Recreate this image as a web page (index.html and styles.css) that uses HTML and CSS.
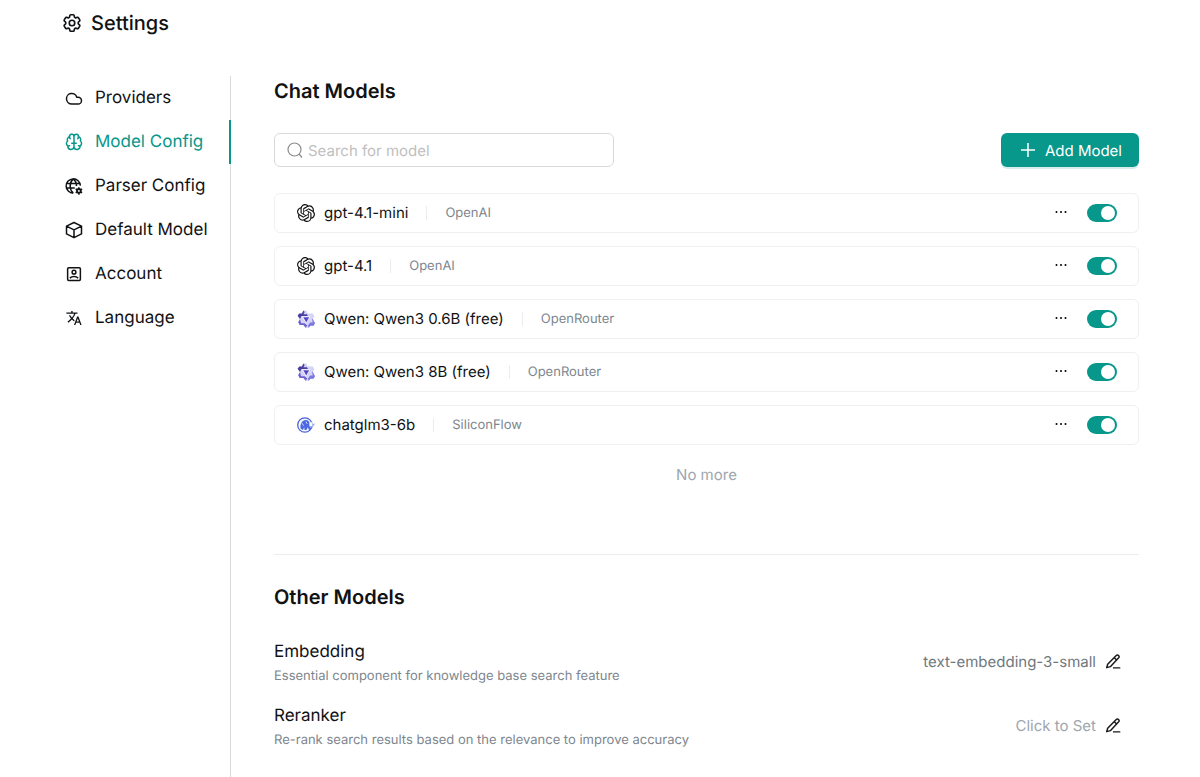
FILE: index.html
```html
<!DOCTYPE html>
<html lang="en">
<head>
<meta charset="utf-8">
<meta name="viewport" content="width=device-width, initial-scale=1">
<title>Settings</title>
<link rel="stylesheet" href="styles.css">
</head>
<body>
<svg class="defs" width="0" height="0" aria-hidden="true">
  <symbol id="i-openai" viewBox="0 0 24 24"><path fill="currentColor" d="M22.2819 9.8211a5.9847 5.9847 0 0 0-.5157-4.9108 6.0462 6.0462 0 0 0-6.5098-2.9A6.0651 6.0651 0 0 0 4.9807 4.1818a5.9847 5.9847 0 0 0-3.9977 2.9 6.0462 6.0462 0 0 0 .7427 7.0966 5.98 5.98 0 0 0 .511 4.9107 6.051 6.051 0 0 0 6.5146 2.9001A5.9847 5.9847 0 0 0 13.2599 24a6.0557 6.0557 0 0 0 5.7718-4.2058 5.9894 5.9894 0 0 0 3.9977-2.9001 6.0557 6.0557 0 0 0-.7475-7.0729zm-9.022 12.6081a4.4755 4.4755 0 0 1-2.8764-1.0408l.1419-.0804 4.7783-2.7582a.7948.7948 0 0 0 .3927-.6813v-6.7369l2.02 1.1686a.071.071 0 0 1 .038.052v5.5826a4.504 4.504 0 0 1-4.4945 4.4944zm-9.6607-4.1254a4.4708 4.4708 0 0 1-.5346-3.0137l.142.0852 4.783 2.7582a.7712.7712 0 0 0 .7806 0l5.8428-3.3685v2.3324a.0804.0804 0 0 1-.0332.0615L9.74 19.9502a4.4992 4.4992 0 0 1-6.1408-1.6464zM2.3408 7.8956a4.485 4.485 0 0 1 2.3655-1.9728V11.6a.7664.7664 0 0 0 .3879.6765l5.8144 3.3543-2.0201 1.1685a.0757.0757 0 0 1-.071 0l-4.8303-2.7865A4.504 4.504 0 0 1 2.3408 7.872zm16.5963 3.8558L13.1038 8.364 15.1192 7.2a.0757.0757 0 0 1 .071 0l4.8303 2.7913a4.4944 4.4944 0 0 1-.6765 8.1042v-5.6772a.79.79 0 0 0-.407-.667zm2.0107-3.0231l-.142-.0852-4.7735-2.7818a.7759.7759 0 0 0-.7854 0L9.409 9.2297V6.8974a.0662.0662 0 0 1 .0284-.0615l4.8303-2.7866a4.4992 4.4992 0 0 1 6.6802 4.66zM8.3065 12.863l-2.02-1.1638a.0804.0804 0 0 1-.038-.0567V6.0742a4.4992 4.4992 0 0 1 7.3757-3.4537l-.142.0805L8.704 5.459a.7948.7948 0 0 0-.3927.6813zm1.0976-2.3654l2.602-1.4998 2.6069 1.4998v2.9994l-2.5974 1.4997-2.6067-1.4997Z"/></symbol>
  <symbol id="i-qwen" viewBox="0 0 24 24">
    <path d="M8.500 .5h4l1.700 4h7l2 4-2.200 3.500 3 5.500-2 3.500h-4l-2.500 2.500h-4L8.500 20H3.600l-2-3.700L4 12 .8 7.600 3 4.500h3.600Z" fill="#d5d3f6"/>
    <path d="M8.500.5 6.600 4.500H3L.8 7.600 4 12l2-4h8.500l-1.200-2.500H8.600l1.600-3Z" fill="#4a3f9f"/>
    <path d="M1.600 16.300 3.600 20h5l3 3.500 2-2.800-3.500-3.200H5.500L4 12Z" fill="#6b61d0"/>
    <path d="M24 17.500 22 21h-4l-2.500 2.500-1-2.500 3-4.500h3.500l-1-5 1 .5Z" fill="#7d77e2"/>
    <path d="M6.500 8.500h11.500l-5.800 9.500Z" fill="#fff"/>
    <path d="M8.300 9.800h8l-4 6.700Z" fill="#5548c4"/>
  </symbol>
  <symbol id="i-glm" viewBox="0 0 24 24">
    <circle cx="10.500" cy="12" r="9.600" fill="#f3f6ff" stroke="#4c63d8" stroke-width="1.700"/>
    <path d="M5 17c-1.200-5 .6-10 5-11.500 4-1 7 1.500 7.500 5.500.2 2.500 0 4 1.500 6l-3 1.500-1.600-3.500-1.800 3.500h-2.400L9.500 15 8 18.600Z" fill="#4c68e2"/>
    <path d="M6.500 9.500 9 13m3-5.500 1.500 3" stroke="#dfe6ff" stroke-width="1.200"/>
    <path d="M18.500 8.500v5.500" stroke="#fff" stroke-width="4"/>
    <path d="M17 13.500c2 2 4.500 1.500 5.500-2m-1.800-1 1.800 1 1.300-1.500" stroke="#7fa2e8" stroke-width="1.200" fill="none"/>
  </symbol>
  <symbol id="i-more" viewBox="0 0 12 12"><g fill="currentColor"><circle cx="1.500" cy="5" r="1"/><circle cx="6" cy="5" r="1"/><circle cx="10.500" cy="5" r="1"/></g></symbol>
  <symbol id="i-edit" viewBox="0 0 24 24"><g fill="none" stroke="currentColor" stroke-width="2.200" stroke-linejoin="round"><path d="M16.500 2.500a2.500 2.500 0 0 1 4 3.200L8 19 2.500 20.500 4 15.500Z"/><path d="m14 5.500 3.500 3.500M12 20.800h11"/></g></symbol>
</svg>

<header class="header">
  <svg class="header-icon" viewBox="0 0 24 24" fill="none" stroke="currentColor" stroke-width="1.800" stroke-linejoin="round"><path d="M9.594 3.940c.09-.542.56-.94 1.110-.94h2.593c.55 0 1.020.398 1.110.94l.213 1.281c.063.374.313.686.645.87.074.04.147.083.22.127.325.196.72.257 1.075.124l1.217-.456a1.125 1.125 0 0 1 1.370.49l1.296 2.247a1.125 1.125 0 0 1-.26 1.431l-1.003.827c-.293.241-.438.613-.43.992a7.723 7.723 0 0 1 0 .255c-.008.378.137.75.43.991l1.004.827c.424.35.534.955.26 1.430l-1.298 2.247a1.125 1.125 0 0 1-1.369.491l-1.217-.456c-.355-.133-.75-.072-1.076.124a6.470 6.470 0 0 1-.22.128c-.331.183-.581.495-.644.869l-.213 1.281c-.09.543-.56.94-1.110.94h-2.594c-.55 0-1.019-.398-1.110-.94l-.213-1.281c-.062-.374-.312-.686-.644-.87a6.520 6.520 0 0 1-.22-.127c-.325-.196-.72-.257-1.076-.124l-1.217.456a1.125 1.125 0 0 1-1.369-.49l-1.297-2.247a1.125 1.125 0 0 1 .26-1.431l1.004-.827c.292-.24.437-.613.43-.991a6.932 6.932 0 0 1 0-.255c.007-.38-.138-.751-.43-.992l-1.004-.827a1.125 1.125 0 0 1-.26-1.430l1.297-2.247a1.125 1.125 0 0 1 1.370-.491l1.216.456c.356.133.751.072 1.076-.124.072-.044.146-.086.22-.128.332-.183.582-.495.644-.869l.214-1.280Z"/><circle cx="12" cy="12" r="3"/></svg>
  <h1 class="header-title">Settings</h1>
</header>

<div class="layout">
  <nav class="sidebar" aria-label="Settings">
    <a class="nav-item" href="#providers">
      <svg class="nav-icon" viewBox="0 0 24 24" fill="none" stroke="currentColor" stroke-width="2"><path d="M17.500 20H9a7 7 0 1 1 6.710-9h1.790a4.500 4.500 0 1 1 0 9Z"/></svg>
      Providers</a>
    <a class="nav-item active" href="#models" aria-current="page">
      <svg class="nav-icon" viewBox="0 0 24 24" fill="none" stroke="currentColor" stroke-width="2" stroke-linecap="round" stroke-linejoin="round"><path d="M12 4.500A3 3 0 0 0 6 5a4 4 0 0 0-2.500 5.700 4 4 0 0 0 .5 6.700A4 4 0 0 0 12 18.500ZM12 4.500A3 3 0 0 1 18 5a4 4 0 0 1 2.500 5.700 4 4 0 0 1-.5 6.700A4 4 0 0 1 12 18.500Z"/><path d="M9 13.500h6M6 5c0 1 .4 2 1 2.500M18 5c0 1-.4 2-1 2.500M4 17.400c.6-.4 1.300-.5 2-.4m14 .4c-.6-.4-1.300-.5-2-.4"/></svg>
      Model Config</a>
    <a class="nav-item" href="#parser">
      <svg class="nav-icon" viewBox="0 0 24 24" fill="none" stroke="currentColor" stroke-width="2"><path d="M20.500 11.500A9.500 9.500 0 1 0 11 21.500M2 8.500h18M2 14.500h11M11 2.500c-5.500 5-5.500 14 0 19M11 2.500c3 2.500 4.500 6 4.300 9.500"/><circle cx="18.500" cy="18.500" r="2.500" stroke-width="2.400"/><path stroke-width="2" d="M18.500 13.500v2.500m0 5v2.500m-4.300-7.500 2.100 1.200m4.400 2.600 2.100 1.200m-8.600 0 2.100-1.200m4.400-2.600 2.100-1.200"/></svg>
      Parser Config</a>
    <a class="nav-item" href="#default">
      <svg class="nav-icon" viewBox="0 0 24 24" fill="none" stroke="currentColor" stroke-width="2" stroke-linejoin="round"><path d="M12 2 22 6.800v10.400l-10 5-10-5V6.800ZM2 6.800l10 5 10-5M12 11.800v10.400"/></svg>
      Default Model</a>
    <a class="nav-item" href="#account">
      <svg class="nav-icon" viewBox="0 0 24 24" fill="none" stroke="currentColor" stroke-width="2"><rect x="3.500" y="3.500" width="17" height="17" rx="1.500"/><circle cx="12" cy="9.500" r="2.500"/><path d="M6.500 17.500c2.800-3 8.200-3 11 0"/></svg>
      Account</a>
    <a class="nav-item" href="#language">
      <svg class="nav-icon" viewBox="-1 -1 26 26" fill="currentColor"><path d="m12.870 15.070-2.540-2.510.03-.03A17.520 17.520 0 0 0 14.070 6H17V4h-7V2H8v2H1v1.990h11.170C11.500 7.920 10.440 9.750 9 11.350 8.070 10.320 7.300 9.190 6.690 8h-2c.73 1.630 1.730 3.170 2.980 4.560l-5.090 5.020L4 19l5-5 3.110 3.110zM18.500 10h-2L12 22h2l1.120-3h4.750L21 22h2zm-2.620 7 1.620-4.330L19.120 17z"/></svg>
      Language</a>
  </nav>

  <main class="content">
    <section class="chat">
      <h2 class="section-title">Chat Models</h2>
      <div class="toolbar">
        <label class="search">
          <svg class="search-icon" viewBox="0 0 16 16" fill="none" stroke="currentColor" stroke-width="1.200"><circle cx="7.500" cy="7.500" r="6.500"/><path d="m12 12 3 3.500"/></svg>
          <input class="search-input" type="search" placeholder="Search for model" aria-label="Search for model">
        </label>
        <button class="add-button" type="button">
          <svg class="add-icon" viewBox="0 0 14 14" stroke="currentColor" stroke-width="1.500"><path d="M7 0v14M0 7h14"/></svg>
          Add Model
        </button>
      </div>
      <ul class="models">
        <li class="model">
          <svg class="model-icon"><use href="#i-openai"/></svg><span class="model-name">gpt-4.1-mini</span><span class="model-provider">OpenAI</span>
          <button class="more" type="button" aria-label="More actions for gpt-4.1-mini"><svg class="more-icon"><use href="#i-more"/></svg></button>
          <input class="switch" type="checkbox" role="switch" aria-label="Enable gpt-4.1-mini" checked>
        </li>
        <li class="model">
          <svg class="model-icon"><use href="#i-openai"/></svg><span class="model-name">gpt-4.1</span><span class="model-provider">OpenAI</span>
          <button class="more" type="button" aria-label="More actions for gpt-4.1"><svg class="more-icon"><use href="#i-more"/></svg></button>
          <input class="switch" type="checkbox" role="switch" aria-label="Enable gpt-4.1" checked>
        </li>
        <li class="model">
          <svg class="model-icon"><use href="#i-qwen"/></svg><span class="model-name">Qwen: Qwen3 0.6B (free)</span><span class="model-provider">OpenRouter</span>
          <button class="more" type="button" aria-label="More actions for Qwen3 0.6B"><svg class="more-icon"><use href="#i-more"/></svg></button>
          <input class="switch" type="checkbox" role="switch" aria-label="Enable Qwen3 0.6B" checked>
        </li>
        <li class="model">
          <svg class="model-icon"><use href="#i-qwen"/></svg><span class="model-name">Qwen: Qwen3 8B (free)</span><span class="model-provider">OpenRouter</span>
          <button class="more" type="button" aria-label="More actions for Qwen3 8B"><svg class="more-icon"><use href="#i-more"/></svg></button>
          <input class="switch" type="checkbox" role="switch" aria-label="Enable Qwen3 8B" checked>
        </li>
        <li class="model">
          <svg class="model-icon"><use href="#i-glm"/></svg><span class="model-name">chatglm3-6b</span><span class="model-provider">SiliconFlow</span>
          <button class="more" type="button" aria-label="More actions for chatglm3-6b"><svg class="more-icon"><use href="#i-more"/></svg></button>
          <input class="switch" type="checkbox" role="switch" aria-label="Enable chatglm3-6b" checked>
        </li>
      </ul>
      <p class="no-more">No more</p>
    </section>

    <section class="other">
      <h2 class="section-title">Other Models</h2>
      <div class="setting">
        <div class="setting-text">
          <h3 class="setting-name">Embedding</h3>
          <p class="setting-desc">Essential component for knowledge base search feature</p>
        </div>
        <button class="setting-value" type="button">text-embedding-3-small <svg class="edit-icon"><use href="#i-edit"/></svg></button>
      </div>
      <div class="setting">
        <div class="setting-text">
          <h3 class="setting-name">Reranker</h3>
          <p class="setting-desc">Re-rank search results based on the relevance to improve accuracy</p>
        </div>
        <button class="setting-value unset" type="button">Click to Set <svg class="edit-icon"><use href="#i-edit"/></svg></button>
      </div>
    </section>
  </main>
</div>
</body>
</html>
```
FILE: styles.css
```css
* { box-sizing: border-box; }

body {
  display: flex;
  flex-direction: column;
  min-height: 100vh;
  margin: 0;
  background: #fff;
  color: #111214;
  font-family: Inter, "Liberation Sans", sans-serif;
  text-rendering: geometricPrecision;
}

h1, h2, h3, p, ul { margin: 0; padding: 0; }
button, input { font: inherit; text-rendering: inherit; }
button { border: 0; padding: 0; background: none; cursor: pointer; }
svg { flex: none; }
.defs { position: absolute; }

.header {
  display: flex;
  align-items: center;
  gap: 8px;
  height: 46px;
  padding: 0 61px;
}
.header-icon { width: 22px; height: 22px; }
.header-title { font-size: 20px; font-weight: 500; line-height: 28px; }

.layout {
  display: flex;
  flex: 1;
  padding: 30px 61px 0 65px;
}

.sidebar {
  flex: none;
  width: 166px;
  border-right: 1px solid #d9d9d9;
}
.nav-item {
  display: flex;
  align-items: center;
  gap: 12px;
  height: 44px;
  margin-right: -1px;
  border-right: 2px solid transparent;
  color: inherit;
  font-size: 17px;
  text-decoration: none;
}
.nav-item.active { border-color: #07978b; color: #07978b; }
.nav-icon { width: 18px; height: 18px; }

.content { flex: 1; min-width: 0; padding-left: 43px; }
.section-title { font-size: 20px; font-weight: 600; line-height: 30px; }

.toolbar {
  display: flex;
  justify-content: space-between;
  align-items: center;
  margin-top: 27px;
}
.search {
  display: flex;
  align-items: center;
  gap: 5px;
  width: 340px;
  height: 34px;
  padding: 0 12px;
  border: 1px solid #d9d9d9;
  border-radius: 6px;
}
.search-icon { width: 16px; height: 16px; color: #8c8c8c; }
.search-input {
  flex: 1;
  min-width: 0;
  padding: 0;
  border: 0;
  outline: 0;
  background: none;
  font-size: 15px;
}
.search-input::placeholder { color: #bfbfbf; }

.add-button {
  display: flex;
  align-items: center;
  gap: 10px;
  height: 34px;
  padding: 0 17px 0 20px;
  border-radius: 6px;
  background: #07978b;
  box-shadow: 0 2px 0 #d5eeec;
  color: #fff;
  font-size: 15px;
}
.add-icon { width: 14px; height: 14px; }

.models {
  display: grid;
  gap: 13px;
  margin-top: 26px;
  list-style: none;
}
.model {
  display: flex;
  align-items: center;
  height: 40px;
  padding: 0 21px 0 22px;
  border: 1px solid #f0f0f0;
  border-radius: 6px;
}
.model-icon { width: 18px; height: 18px; }
.model-name { margin-left: 9px; font-size: 15px; line-height: 18px; }
.model-provider {
  margin-left: 18px;
  padding-left: 18px;
  border-left: 1px solid #ececec;
  color: #7d868e;
  font-size: 13px;
  line-height: 14px;
}
.more { display: flex; margin-left: auto; }
.more-icon { width: 12px; height: 12px; }
.switch {
  display: flex;
  align-items: center;
  justify-content: flex-end;
  width: 30px;
  height: 18px;
  margin: 0 0 0 20px;
  padding: 0 2px;
  appearance: none;
  border-radius: 9px;
  background: #b8bcc0;
  cursor: pointer;
}
.switch::before {
  content: "";
  width: 14px;
  height: 14px;
  border-radius: 50%;
  background: #fff;
}
.switch:checked { background: #07978b; }
.switch:not(:checked) { justify-content: flex-start; }

.no-more {
  margin-top: 20px;
  color: #9ea6ad;
  font-size: 15px;
  line-height: 20px;
  text-align: center;
}

.other {
  margin-top: 69px;
  padding-top: 27px;
  border-top: 1px solid #ececec;
}
.setting {
  display: flex;
  align-items: flex-start;
  justify-content: space-between;
  margin-top: 16px;
  padding-right: 18px;
}
.section-title + .setting { margin-top: 28px; }
.setting-name { font-size: 17px; font-weight: 400; line-height: 24px; }
.setting-desc { color: #7d868e; font-size: 13px; line-height: 24px; }
.setting-value {
  display: flex;
  align-items: center;
  gap: 9px;
  margin-top: 12px;
  color: #6f7880;
  font-size: 15px;
  line-height: 20px;
}
.setting-value.unset { color: #9ea6ad; }
.edit-icon { width: 16px; height: 16px; color: #18191b; }
```
